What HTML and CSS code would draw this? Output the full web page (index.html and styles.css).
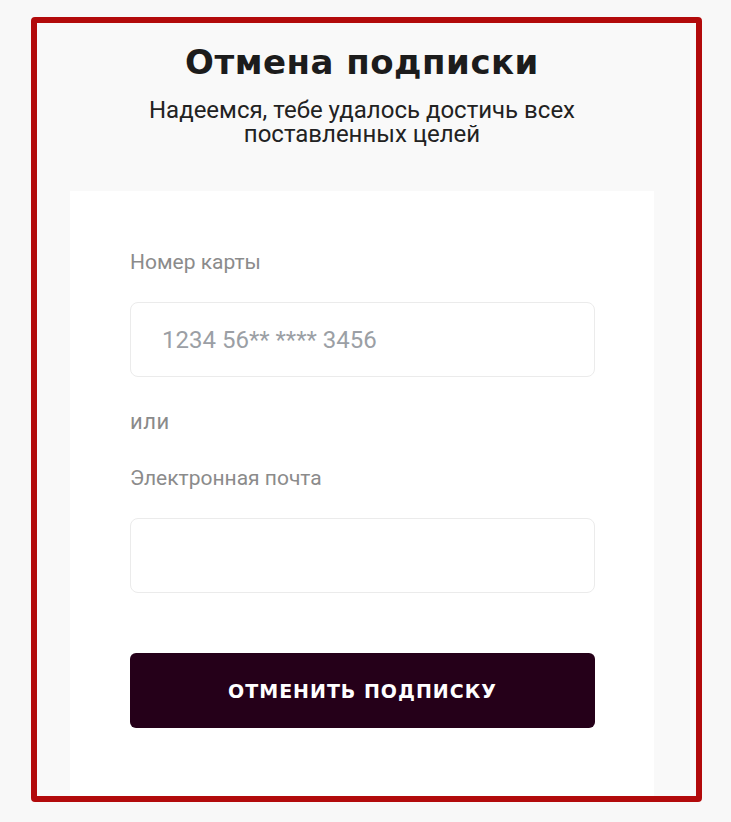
FILE: index.html
```html
<!DOCTYPE html>
<html lang="ru">
<head>
    <meta charset="UTF-8">
    <meta name="viewport" content="width=device-width, initial-scale=1.0">
    <title>Отмена подписки</title>
    <link rel="stylesheet" href="styles.css">
</head>
<body>

    <div class="frame">
        <h1 class="title">Отмена подписки</h1>
        <p class="subtitle">Надеемся, тебе удалось достичь всех поставленных целей</p>

        <div class="card">
            <label class="field-label">Номер карты</label>
            <input type="text" class="field" placeholder="1234 56** **** 3456">

            <div class="or">или</div>

            <label class="field-label">Электронная почта</label>
            <input type="email" class="field">

            <button class="submit">Отменить подписку</button>
        </div>
    </div>

</body>
</html>
```

FILE: styles.css
```css
body {
    margin: 0;
    padding: 17px 29px 20px 31px;
    background-color: #f8f8f8;
    font-family: Roboto, Arial, sans-serif;
}
.frame {
    box-sizing: border-box;
    height: 785px;
    border: 6px solid #b20a0b;
    border-radius: 4px;
    padding: 0 42px 0 33px;
    overflow: hidden;
    background-color: #f9f9f9;
}
.title {
    margin: 17px 0 0;
    text-align: center;
    font-family: "DejaVu Sans", "Liberation Sans", sans-serif;
    font-weight: bold;
    font-size: 34px;
    line-height: 44px;
    letter-spacing: 0.5px;
    color: #1c1c1c;
}
.subtitle {
    width: 440px;
    margin: 14px auto 0;
    text-align: center;
    font-size: 24px;
    line-height: 24px;
    color: #222;
}
.card {
    display: flex;
    flex-direction: column;
    margin-top: 45px;
    padding: 59px 59px 80px 60px;
    background-color: #fff;
    min-height: 600px;
}
.field-label {
    font-size: 21px;
    line-height: 24px;
    color: #8b8b8b;
}
.field {
    box-sizing: border-box;
    height: 75px;
    margin-top: 28px;
    padding: 0 31px;
    border: 1px solid #ebebeb;
    border-radius: 8px;
    font-family: Roboto, Arial, sans-serif;
    font-size: 24px;
    color: #333;
    background: #fff;
}
.field::placeholder {
    color: #9b9fa5;
}
.or {
    margin: 32px 0 31px;
    font-size: 22px;
    line-height: 26px;
    color: #8a8a8a;
    letter-spacing: 0.5px;
}
.submit {
    height: 75px;
    margin-top: 60px;
    border: none;
    border-radius: 6px;
    background-color: #250019;
    color: #fff;
    font-family: "DejaVu Sans", "Liberation Sans", sans-serif;
    font-weight: bold;
    font-size: 19px;
    letter-spacing: 1px;
    text-transform: uppercase;
}
```
